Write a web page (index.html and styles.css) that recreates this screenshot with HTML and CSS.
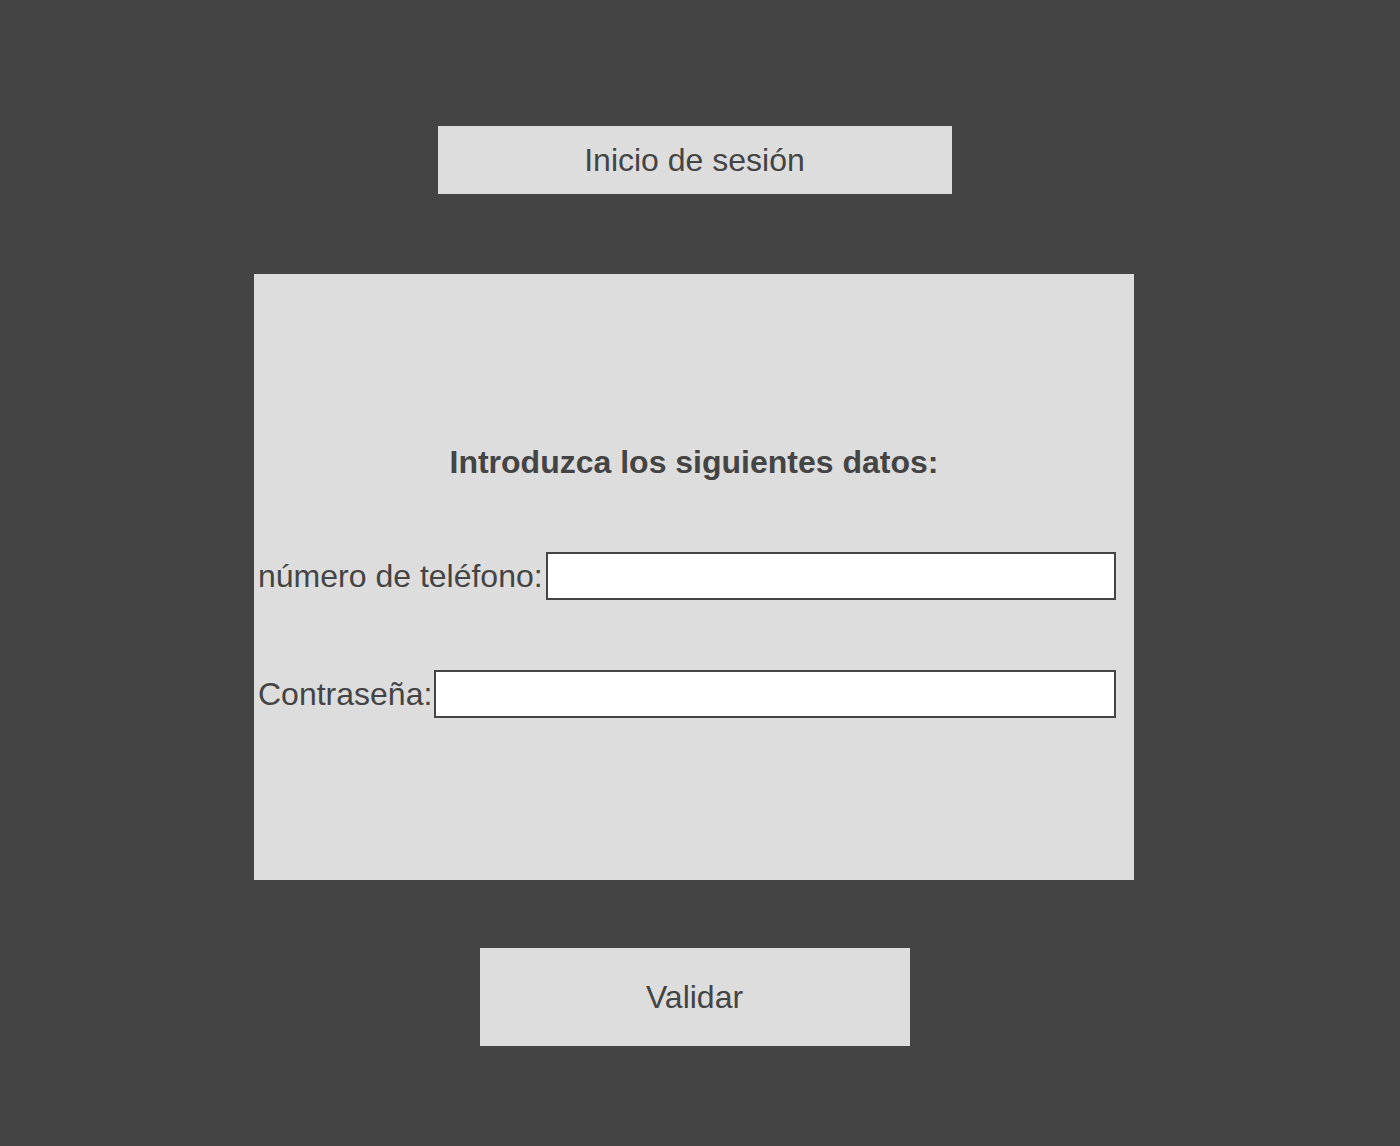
FILE: index.html
```html
<!DOCTYPE html>
<html lang="es">
<head>
<meta charset="utf-8">
<title>Inicio de sesión</title>
<link rel="stylesheet" href="styles.css">
</head>
<body>
<main class="page">
  <header class="title-box">Inicio de sesión</header>
  <section class="card">
    <h1 class="card-heading">Introduzca los siguientes datos:</h1>
    <div class="field-row">
      <label class="field-label field-label-tel" for="tel">número de teléfono:</label>
      <input class="field-input" id="tel" type="text">
    </div>
    <div class="field-row field-row-second">
      <label class="field-label" for="pwd">Contraseña:</label>
      <input class="field-input" id="pwd" type="password">
    </div>
  </section>
  <button class="validate-btn" type="button">Validar</button>
</main>
</body>
</html>
```
FILE: styles.css
```css
html, body {
  margin: 0;
  padding: 0;
  background: #444444;
}
body {
  font-family: "Liberation Sans", Arial, sans-serif;
  color: #444444;
}
.page {
  width: 1389px;
  display: flex;
  flex-direction: column;
  align-items: center;
  padding-top: 126px;
}
.title-box {
  width: 514px;
  height: 68px;
  background: #dddddd;
  display: flex;
  align-items: center;
  justify-content: center;
  font-size: 32px;
}
.card {
  margin-top: 80px;
  margin-right: 1px;
  width: 880px;
  height: 606px;
  box-sizing: border-box;
  background: #dddddd;
  padding: 170px 18px 0 4px;
  display: flex;
  flex-direction: column;
}
.card-heading {
  margin: 0;
  font-size: 32px;
  font-weight: bold;
  text-align: center;
  padding-left: 14px;
  line-height: 37px;
}
.field-row {
  display: flex;
  align-items: center;
  margin-top: 71px;
}
.field-row-second {
  margin-top: 70px;
}
.field-label {
  font-size: 32px;
  white-space: nowrap;
  margin-right: 2px;
}
.field-label-tel {
  margin-right: 3px;
}
.field-input {
  flex: 1;
  height: 48px;
  box-sizing: border-box;
  border: 2px solid #444444;
  background: #ffffff;
  margin: 0;
  padding: 0 6px;
  font-family: inherit;
  font-size: 24px;
  border-radius: 0;
  outline: none;
}
.validate-btn {
  margin-top: 68px;
  width: 430px;
  height: 98px;
  background: #dddddd;
  border: none;
  font-family: inherit;
  font-size: 32px;
  color: #444444;
  padding: 0;
}
```
